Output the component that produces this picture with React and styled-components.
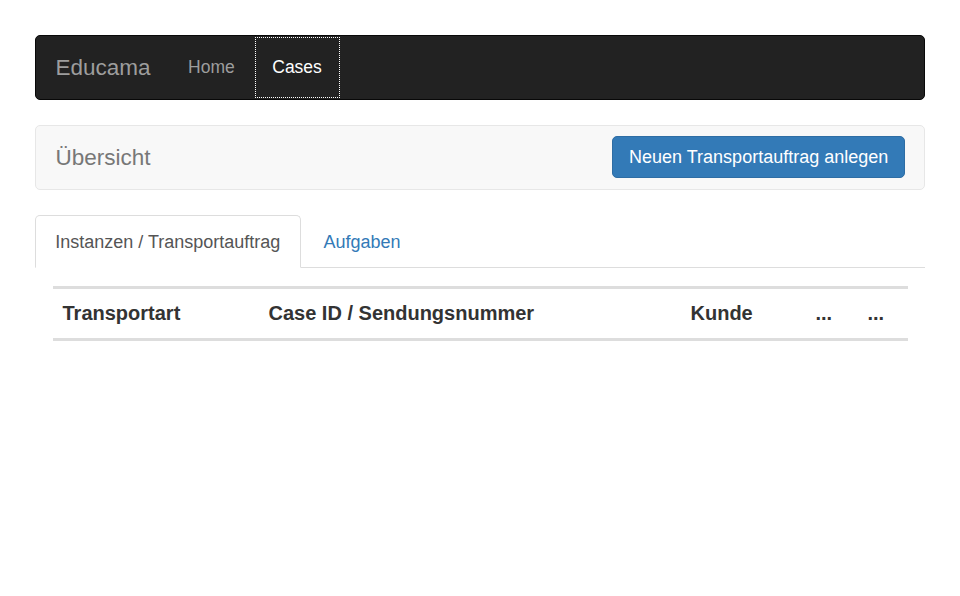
import React from "react";
import styled, { createGlobalStyle } from "styled-components";

const Global = createGlobalStyle`
  html, body { margin: 0; padding: 0; background: #fff; }
  body {
    font-family: "Liberation Sans", Helvetica, Arial, sans-serif;
    font-size: 17.5px;
    line-height: 1.42857;
    color: #333;
  }
  * { box-sizing: border-box; }
`;

const Page = styled.div`
  padding: 35px 35px 0 35px;
`;

const Navbar = styled.nav`
  display: flex;
  align-items: stretch;
  justify-content: space-between;
  min-height: 65px;
  border: 1px solid ${(p) => (p.$inverse ? "#080808" : "#e7e7e7")};
  background: ${(p) => (p.$inverse ? "#222" : "#f8f8f8")};
  border-radius: 5px;
  margin-bottom: 25px;
`;

const Left = styled.div`
  display: flex;
  align-items: stretch;
`;

const Brand = styled.a`
  display: block;
  height: 62.5px;
  padding: 18.75px 18.75px 18.75px 19.5px;
  font-size: 22.5px;
  line-height: 25px;
  color: ${(p) => (p.$inverse ? "#9d9d9d" : "#777")};
  text-decoration: none;
`;

const NavLink = styled.a`
  display: block;
  padding: 18.75px 18.75px;
  line-height: 25px;
  color: ${(p) => (p.$active ? "#fff" : "#9d9d9d")};
  text-decoration: none;
  outline: ${(p) => (p.$active ? "1px dotted #fff" : "none")};
  outline-offset: -2px;
`;

const PrimaryButton = styled.button`
  align-self: flex-start;
  margin: 10px 18.75px 0 0;
  padding: 7.5px 16px;
  font: inherit;
  font-size: 18px;
  line-height: 25px;
  color: #fff;
  background: #337ab7;
  border: 1px solid #2e6da4;
  border-radius: 5px;
  cursor: pointer;
`;

const Tabs = styled.ul`
  display: flex;
  list-style: none;
  margin: 0;
  padding: 0;
  border-bottom: 1px solid #ddd;
`;

const Tab = styled.li`
  margin-bottom: -1px;
  margin-right: 2.5px;
`;

const TabLink = styled.a`
  display: block;
  padding: 12.5px 19.25px;
  font-size: 18px;
  line-height: 26px;
  border: 1px solid ${(p) => (p.$active ? "#ddd" : "transparent")};
  border-bottom-color: ${(p) => (p.$active ? "#fff" : "transparent")};
  border-radius: 5px 5px 0 0;
  background: ${(p) => (p.$active ? "#fff" : "transparent")};
  color: ${(p) => (p.$active ? "#555" : "#337ab7")};
  text-decoration: none;
`;

const TabPane = styled.div`
  padding: 18px 17.5px 0 17.5px;
`;

const Table = styled.table`
  width: 100%;
  border-collapse: collapse;
  border-spacing: 0;
`;

const Th = styled.th`
  text-align: left;
  font-size: 20px;
  font-weight: bold;
  line-height: 1.42857;
  padding: 10px;
  color: #333;
  border-top: 3px solid #ddd;
  border-bottom: 3px solid #ddd;
  width: ${(p) => p.$w}px;
`;

export default function App() {
  return (
    <>
      <Global />
      <Page>
        <Navbar $inverse>
          <Left>
            <Brand $inverse href="#">Educama</Brand>
            <NavLink href="#">Home</NavLink>
            <NavLink $active href="#">Cases</NavLink>
          </Left>
        </Navbar>
        <Navbar>
          <Brand href="#">Übersicht</Brand>
          <PrimaryButton>Neuen Transportauftrag anlegen</PrimaryButton>
        </Navbar>
        <Tabs>
          <Tab>
            <TabLink $active href="#">Instanzen / Transportauftrag</TabLink>
          </Tab>
          <Tab>
            <TabLink href="#">Aufgaben</TabLink>
          </Tab>
        </Tabs>
        <TabPane>
          <Table>
            <thead>
              <tr>
                <Th $w={206}>Transportart</Th>
                <Th $w={422}>Case ID / Sendungsnummer</Th>
                <Th $w={125}>Kunde</Th>
                <Th $w={52}>...</Th>
                <Th $w={50}>...</Th>
              </tr>
            </thead>
          </Table>
        </TabPane>
      </Page>
    </>
  );
}
